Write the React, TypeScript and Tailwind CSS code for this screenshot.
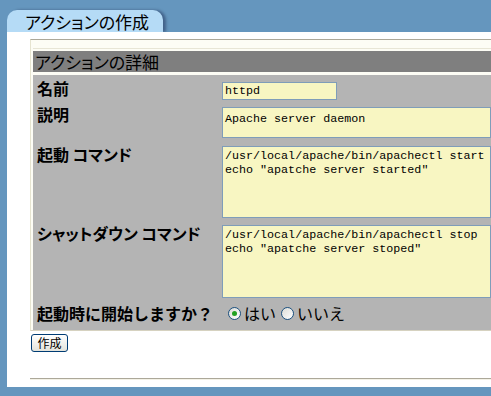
function Radio({ checked }: { checked?: boolean }) {
  return (
    <span className="inline-flex h-[13px] w-[13px] items-center justify-center rounded-full border border-[#1c5180] bg-gradient-to-br from-[#dcdcd7] to-white">
      {checked && <span className="h-[5px] w-[5px] rounded-full bg-[#21a121]" />}
    </span>
  )
}

const label = "text-[16px] font-bold leading-[20px] text-black [font-feature-settings:'palt']"
const mono = "font-['Liberation_Mono',monospace] text-[11.7px] leading-[14px] text-black"
const field = 'border border-[#7f9db9] bg-[#f8f6c2] px-[2px]'

export default function App() {
  return (
    <div className="h-[396px] w-[491px] overflow-hidden bg-[#6596be] pt-[10px] font-['Noto_Sans_CJK_JP',sans-serif]">
      <div className="ml-[7px] flex h-[22px] w-[156px] items-center rounded-t-[10px] bg-[#b5dbf6] pl-[18px] text-[17px] leading-none text-black shadow-[3px_0_3px_rgba(0,0,40,0.35)] [font-feature-settings:'palt']">
        アクションの作成
      </div>
      <div className="ml-[7px] h-[355px] bg-white pl-[23px] pt-[7px]">
        <div className="border-l border-t border-b border-l-[#e6e4d0] border-t-[#aca899] border-b-[#d6d2c0] bg-[#fdfdf5] pl-[2px]">
          <div className="mt-[8px] border-t border-[#e8e6d6] pt-[2px]">
            <div className="flex h-[21px] items-center bg-[#7f7f7f] pl-[2px] text-[17px] text-black [font-feature-settings:'palt']">アクションの詳細</div>
          </div>
          <div className="mt-[3px] bg-[#b4b4b4] pl-[4px]">
            <div className="flex h-[28px] items-start">
              <div className={`${label} w-[185px] pt-[3px]`}>名前</div>
              <div className={`${field} ${mono} mt-[7px] h-[18px] w-[115px] leading-[16px]`}>httpd</div>
            </div>
            <div className="flex h-[39px] items-start">
              <div className={`${label} w-[185px] pt-[1px]`}>説明</div>
              <div className={`${field} ${mono} mt-[4px] h-[31px] flex-1 pt-[4px]`}>Apache server daemon</div>
            </div>
            <div className="flex h-[80px] items-start">
              <div className={`${label} w-[185px] pt-[2px]`}>起動 コマンド</div>
              <div className={`${field} ${mono} mt-[4px] h-[72px] flex-1 whitespace-pre pt-[2px]`}>
                {'/usr/local/apache/bin/apachectl start\necho "apatche server started"'}
              </div>
            </div>
            <div className="flex h-[78px] items-start">
              <div className={`${label} w-[185px] pt-[1px]`}>シャットダウン コマンド</div>
              <div className={`${field} ${mono} mt-[3px] h-[73px] flex-1 whitespace-pre pt-[2px]`}>
                {'/usr/local/apache/bin/apachectl stop\necho "apatche server stoped"'}
              </div>
            </div>
            <div className="flex h-[30px] items-center pb-[4px]">
              <div className="w-[191px] text-[16px] font-bold leading-[20px] text-black">起動時に開始しますか？</div>
              <Radio checked />
              <span className="ml-[3px] mr-[5px] text-[16px] text-black">はい</span>
              <Radio />
              <span className="ml-[3px] text-[16px] text-black">いいえ</span>
            </div>
          </div>
        </div>
        <button className="ml-[1px] mt-[3px] flex h-[18px] w-[37px] items-center justify-center rounded-[3px] border border-[#003c74] bg-gradient-to-b from-white to-[#e3e3db] text-[12px] leading-none text-black">
          作成
        </button>
        <div className="mt-[26px] h-[2px] border-t border-[#aca899] bg-[#f3f1e6]" />
      </div>
    </div>
  )
}
